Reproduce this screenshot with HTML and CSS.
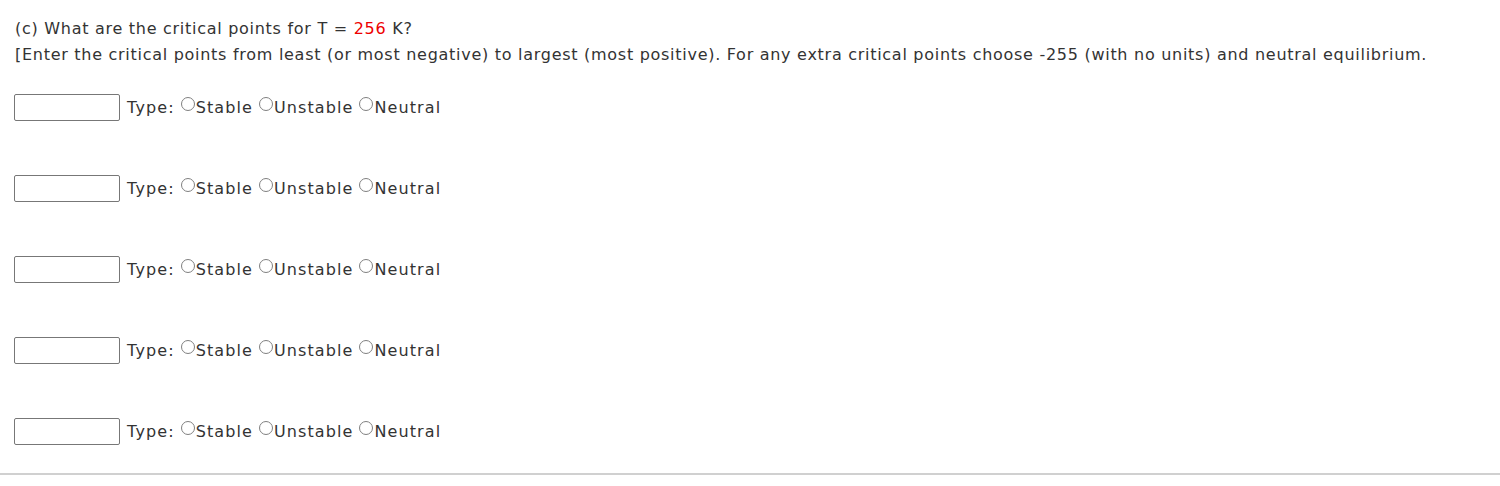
FILE: index.html
```html
<!DOCTYPE html>
<html>
<head>
<meta charset="utf-8">
<link rel="stylesheet" href="styles.css">
</head>
<body>
<div class="question">
  <p class="line">(c) What are the critical points for T = <span class="red">256</span> K?</p>
  <p class="line">[Enter the critical points from least (or most negative) to largest (most positive). For any extra critical points choose -255 (with no units) and neutral equilibrium.</p>
  <div class="rows">
    <div class="row"><span class="box"></span><span class="label">Type:</span><span class="opt"><span class="radio"></span>Stable</span><span class="opt"><span class="radio"></span>Unstable</span><span class="opt"><span class="radio"></span>Neutral</span></div>
    <div class="row"><span class="box"></span><span class="label">Type:</span><span class="opt"><span class="radio"></span>Stable</span><span class="opt"><span class="radio"></span>Unstable</span><span class="opt"><span class="radio"></span>Neutral</span></div>
    <div class="row"><span class="box"></span><span class="label">Type:</span><span class="opt"><span class="radio"></span>Stable</span><span class="opt"><span class="radio"></span>Unstable</span><span class="opt"><span class="radio"></span>Neutral</span></div>
    <div class="row"><span class="box"></span><span class="label">Type:</span><span class="opt"><span class="radio"></span>Stable</span><span class="opt"><span class="radio"></span>Unstable</span><span class="opt"><span class="radio"></span>Neutral</span></div>
    <div class="row"><span class="box"></span><span class="label">Type:</span><span class="opt"><span class="radio"></span>Stable</span><span class="opt"><span class="radio"></span>Unstable</span><span class="opt"><span class="radio"></span>Neutral</span></div>
  </div>
</div>
<hr class="rule">
</body>
</html>
```
FILE: styles.css
```css
html, body {
  margin: 0;
  padding: 0;
  background: #fff;
}
body {
  font-family: "DejaVu Sans", Verdana, sans-serif;
  font-size: 16px;
  letter-spacing: 0.72px;
  color: #333;
}
.question {
  padding: 16px 0 0 15px;
}
.line {
  margin: 0;
  line-height: 26px;
  white-space: nowrap;
}
.red {
  color: #e00;
}
.rows {
  display: flex;
  flex-direction: column;
  gap: 54px;
  margin-top: 26px;
  margin-left: -1px;
}
.row {
  display: flex;
  align-items: center;
  height: 27px;
  letter-spacing: 1.1px;
}
.box {
  width: 104px;
  height: 25px;
  border: 1px solid #777;
  border-radius: 2px;
  margin-right: 7px;
}
.label {
  margin-right: 6px;
}
.opt {
  display: inline-flex;
  align-items: flex-start;
  margin-right: 6px;
}
.radio {
  display: inline-block;
  width: 12px;
  height: 12px;
  border: 1px solid #808080;
  border-radius: 50%;
  margin-top: -1px;
  margin-right: 1px;
}
.rule {
  margin: 28px 0 0 0;
  border: 0;
  border-top: 2px solid #d0d0d0;
  height: 0;
}
```
